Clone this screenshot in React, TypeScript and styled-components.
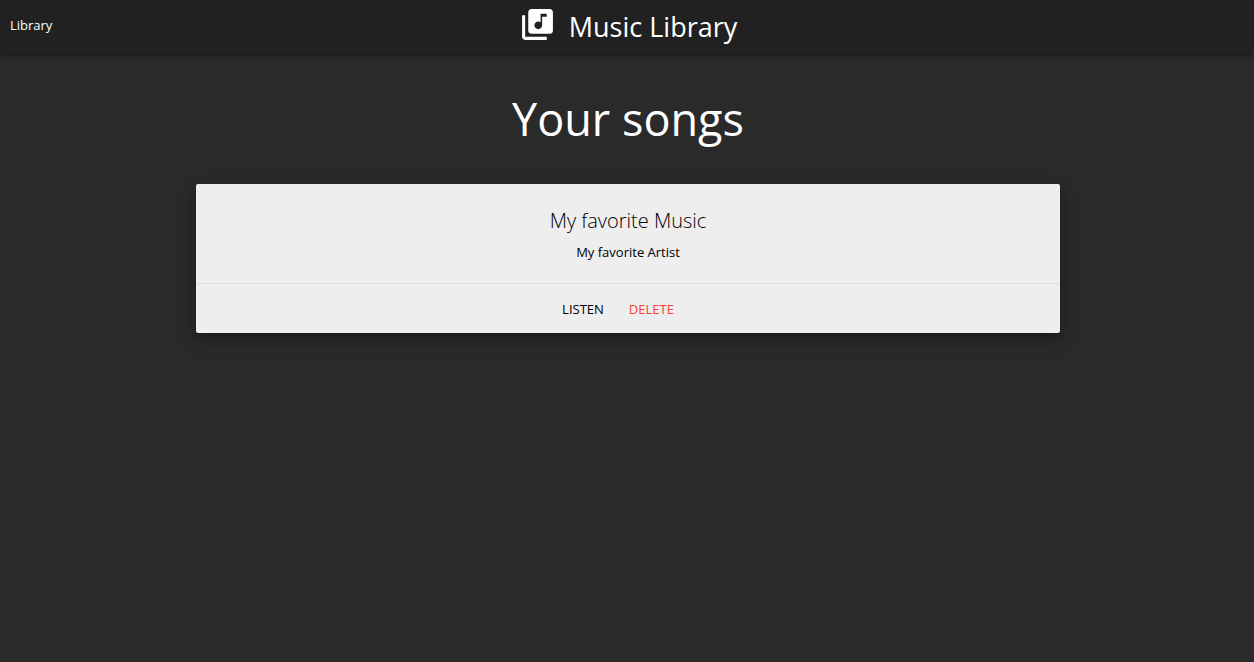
import React from "react";
import styled, { createGlobalStyle } from "styled-components";

const GlobalStyle = createGlobalStyle`
  *, *::before, *::after { box-sizing: border-box; }
  body {
    margin: 0;
    background: #2a2a2a;
    color: #fff;
    font-family: "Segoe UI", "Open Sans", "Noto Sans", sans-serif;
    font-size: 13px;
    line-height: 20px;
  }
`;

const Page = styled.div`
  min-height: 100vh;
`;

const NavBar = styled.nav`
  display: grid;
  grid-template-columns: 1fr auto 1fr;
  align-items: center;
  height: 54px;
  padding: 0 8px 0 10px;
  background: #212121;
  box-shadow: 0 2px 2px 0 rgba(0, 0, 0, 0.14), 0 3px 1px -2px rgba(0, 0, 0, 0.12),
    0 1px 5px 0 rgba(0, 0, 0, 0.2);
`;

const NavLink = styled.a`
  justify-self: start;
  padding-bottom: 4px;
  color: #fff;
  text-decoration: none;
`;

const Brand = styled.a`
  display: flex;
  align-items: flex-start;
  gap: 13px;
  color: #fff;
  font-size: 27px;
  line-height: 52px;
  text-decoration: none;
`;

const BrandIcon = styled.svg`
  width: 37px;
  height: 37px;
  margin-top: 5px;
  fill: currentColor;
`;

const Content = styled.main`
  padding: 33px 194px 36px 196px;
  text-align: center;
`;

const PageTitle = styled.h1`
  margin: 0 0 33px;
  font-size: 45px;
  font-weight: 400;
  line-height: 64px;
`;

const Card = styled.article`
  border-radius: 2px;
  background: #eee;
  color: #000;
  box-shadow: 0 8px 17px 2px rgba(0, 0, 0, 0.14), 0 3px 14px 2px rgba(0, 0, 0, 0.12),
    0 5px 5px -3px rgba(0, 0, 0, 0.2);
`;

const CardBody = styled.div`
  padding: 21px 24px;
`;

const SongTitle = styled.h2`
  margin: 0 0 5px;
  font-size: 20px;
  font-weight: 300;
  line-height: 32px;
`;

const Artist = styled.p`
  margin: 0;
`;

const CardActions = styled.div`
  display: flex;
  justify-content: center;
  gap: 25px;
  padding: 15px 44px 14px 24px;
  border-top: 1px solid #dedede;
`;

const ActionButton = styled.button<{ $danger?: boolean }>`
  padding: 0;
  border: 0;
  background: none;
  color: ${({ $danger }) => ($danger ? "#f44336" : "#000")};
  font: inherit;
  text-transform: uppercase;
  cursor: pointer;
`;

const songs = [{ title: "My favorite Music", artist: "My favorite Artist" }];

export default function App() {
  return (
    <Page>
      <GlobalStyle />
      <NavBar>
        <NavLink href="#library">Library</NavLink>
        <Brand href="#home">
          <BrandIcon viewBox="0 0 24 24" aria-hidden="true">
            <path d="M20 2H8c-1.1 0-2 .9-2 2v12c0 1.1.9 2 2 2h12c1.1 0 2-.9 2-2V4c0-1.1-.9-2-2-2zm-2 5h-3v5.5c0 1.38-1.12 2.5-2.5 2.5S10 13.88 10 12.5s1.12-2.5 2.5-2.5c.57 0 1.08.19 1.5.51V5h4v2zM4 6H2v14c0 1.1.9 2 2 2h14v-2H4V6z" />
          </BrandIcon>
          Music Library
        </Brand>
      </NavBar>
      <Content>
        <PageTitle>Your songs</PageTitle>
        {songs.map((song) => (
          <Card key={song.title}>
            <CardBody>
              <SongTitle>{song.title}</SongTitle>
              <Artist>{song.artist}</Artist>
            </CardBody>
            <CardActions>
              <ActionButton type="button">Listen</ActionButton>
              <ActionButton type="button" $danger>
                Delete
              </ActionButton>
            </CardActions>
          </Card>
        ))}
      </Content>
    </Page>
  );
}
